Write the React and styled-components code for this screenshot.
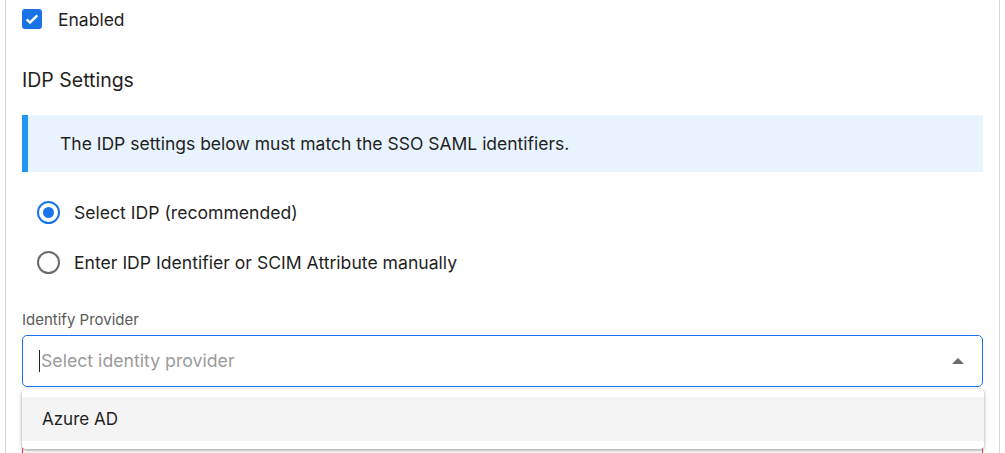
import styled, { createGlobalStyle } from "styled-components";

const GlobalStyle = createGlobalStyle`
  html, body {
    margin: 0;
    padding: 0;
    background: #fff;
    overflow: hidden;
  }
  body {
    font-family: Inter, "Noto Sans", Arial, sans-serif;
    color: #1f1f1f;
  }
`;

const Page = styled.div`
  padding-left: 5px;
  height: 453px;
`;

const Card = styled.div`
  width: 995px;
  height: 600px;
  border-left: 1px solid #d6d6d6;
  border-right: 1px solid #d6d6d6;
  padding: 9px 16px 0;
  box-sizing: border-box;
`;

const CheckRow = styled.label`
  display: flex;
  align-items: center;
  gap: 16px;
  font-size: 17.5px;
  height: 20px;
`;

const CheckBox = styled.span`
  width: 20px;
  height: 20px;
  border-radius: 3px;
  background: #1a73e8;
  display: flex;
  align-items: center;
  justify-content: center;
`;

const SectionTitle = styled.h2`
  margin: 38px 0 0;
  font-size: 19.5px;
  font-weight: 400;
  line-height: 26px;
`;

const InfoBox = styled.div`
  margin-top: 22px;
  height: 57px;
  background: #e8f3fd;
  border-left: 6px solid #2196f3;
  display: flex;
  align-items: center;
  padding-left: 32px;
  font-size: 17.5px;
  box-sizing: border-box;
`;

const RadioGroup = styled.div`
  display: flex;
  flex-direction: column;
  gap: 26px;
  margin-top: 28px;
  padding-left: 15px;
`;

const RadioRow = styled.label`
  display: flex;
  align-items: center;
  gap: 14px;
  font-size: 17.6px;
  height: 24px;
`;

const RadioCircle = styled.span`
  width: 23px;
  height: 23px;
  box-sizing: border-box;
  border-radius: 50%;
  border: 2px solid ${(p) => (p.checked ? "#1a73e8" : "#6b6b6b")};
  display: flex;
  align-items: center;
  justify-content: center;
  &::after {
    content: "";
    width: 11px;
    height: 11px;
    border-radius: 50%;
    background: ${(p) => (p.checked ? "#1a73e8" : "transparent")};
  }
`;

const Field = styled.div`
  position: relative;
  margin-top: 37px;
`;

const FieldLabel = styled.div`
  font-size: 15px;
  color: #5a5a5a;
  line-height: 18px;
`;

const SelectBox = styled.div`
  margin-top: 6px;
  height: 52px;
  box-sizing: border-box;
  border: 1px solid #1a73e8;
  border-radius: 5px;
  display: flex;
  align-items: center;
  padding: 0 16px 0 16px;
  font-size: 17.7px;
`;

const Placeholder = styled.span`
  flex: 1;
  color: #9a9a9a;
  border-left: 1px solid #222;
  padding-left: 1px;
  line-height: 22px;
`;

const Arrow = styled.span`
  width: 0;
  height: 0;
  border-left: 6px solid transparent;
  border-right: 6px solid transparent;
  border-bottom: 6px solid #6b6b6b;
  margin-right: 2px;
`;

const NextInput = styled.div`
  margin-top: 58px;
  height: 52px;
  border: 1px solid #e53935;
  border-radius: 5px;
`;

const Menu = styled.div`
  position: absolute;
  left: 0;
  right: -1px;
  top: 78px;
  background: #fff;
  border-radius: 4px;
  box-shadow: 0 1px 3px rgba(0, 0, 0, 0.3), 0 2px 6px rgba(0, 0, 0, 0.12);
  padding: 8px 0;
`;

const Option = styled.div`
  height: 44px;
  display: flex;
  align-items: center;
  padding-left: 20px;
  font-size: 17px;
  background: ${(p) => (p.active ? "#f4f4f4" : "#fff")};
`;

export default function App() {
  return (
    <>
      <GlobalStyle />
      <Page>
        <Card>
          <CheckRow>
            <CheckBox>
              <svg width="16" height="16" viewBox="0 0 24 24">
                <path d="M4 12.5l5 5L20 6.5" fill="none" stroke="#fff" strokeWidth="3.6" />
              </svg>
            </CheckBox>
            Enabled
          </CheckRow>
          <SectionTitle>IDP Settings</SectionTitle>
          <InfoBox>The IDP settings below must match the SSO SAML identifiers.</InfoBox>
          <RadioGroup>
            <RadioRow>
              <RadioCircle checked />
              Select IDP (recommended)
            </RadioRow>
            <RadioRow>
              <RadioCircle />
              Enter IDP Identifier or SCIM Attribute manually
            </RadioRow>
          </RadioGroup>
          <Field>
            <FieldLabel>Identify Provider</FieldLabel>
            <SelectBox>
              <Placeholder>Select identity provider</Placeholder>
              <Arrow />
            </SelectBox>
            <NextInput />
            <Menu>
              <Option active>Azure AD</Option>
            </Menu>
          </Field>
        </Card>
      </Page>
    </>
  );
}
